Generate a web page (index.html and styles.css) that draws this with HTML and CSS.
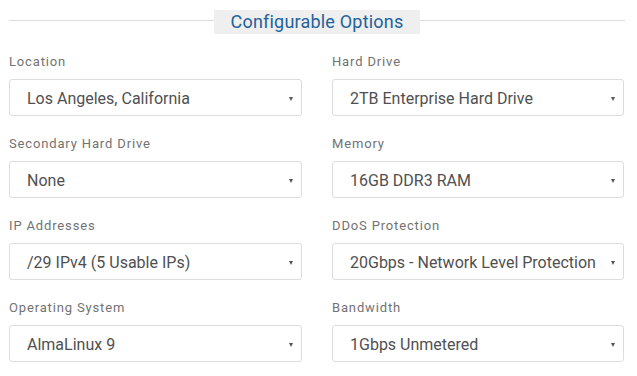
FILE: index.html
```html
<!DOCTYPE html>
<html lang="en">
<head>
  <meta charset="UTF-8" />
  <meta name="viewport" content="width=device-width, initial-scale=1.0" />
  <title>Configurable Options</title>
  <link rel="stylesheet" href="styles.css">
</head>
<body>
  <div class="options">
    <div class="heading">
      <span class="heading-title">Configurable Options</span>
    </div>

    <div class="fields">
      <div class="field">
        <label>Location</label>
        <div class="select"><select><option>Los Angeles, California</option></select></div>
      </div>
      <div class="field">
        <label>Hard Drive</label>
        <div class="select"><select><option>2TB Enterprise Hard Drive</option></select></div>
      </div>
      <div class="field">
        <label>Secondary Hard Drive</label>
        <div class="select"><select><option>None</option></select></div>
      </div>
      <div class="field">
        <label>Memory</label>
        <div class="select"><select><option>16GB DDR3 RAM</option></select></div>
      </div>
      <div class="field">
        <label>IP Addresses</label>
        <div class="select"><select><option>/29 IPv4 (5 Usable IPs)</option></select></div>
      </div>
      <div class="field">
        <label>DDoS Protection</label>
        <div class="select"><select><option>20Gbps - Network Level Protection</option></select></div>
      </div>
      <div class="field">
        <label>Operating System</label>
        <div class="select"><select><option>AlmaLinux 9</option></select></div>
      </div>
      <div class="field">
        <label>Bandwidth</label>
        <div class="select"><select><option>1Gbps Unmetered</option></select></div>
      </div>
    </div>
  </div>
</body>
</html>
```

FILE: styles.css
```css
body {
  margin: 0;
  background: #fff;
  font-family: Roboto, "Liberation Sans", sans-serif;
}
.options {
  width: 616px;
  padding: 10px 0 0 9px;
}
.heading {
  display: flex;
  align-items: center;
  justify-content: center;
  height: 24px;
  margin-bottom: 19px;
  position: relative;
}
.heading::before {
  content: "";
  position: absolute;
  left: 0;
  right: 0;
  top: 10px;
  border-top: 1px solid #dcdcdc;
}
.heading-title {
  position: relative;
  background: #efefef;
  color: #22629a;
  font-size: 18px;
  line-height: 24px;
  letter-spacing: 0.2px;
  padding: 0 17px;
}
.fields {
  display: grid;
  grid-template-columns: 293px 292px;
  column-gap: 30px;
  row-gap: 19px;
}
.field label {
  display: block;
  font-size: 13px;
  line-height: 18px;
  letter-spacing: 0.85px;
  color: #727272;
  margin-bottom: 8px;
}
.select {
  position: relative;
}
.select::after {
  content: "";
  position: absolute;
  right: 9px;
  top: 18px;
  border-left: 2.5px solid transparent;
  border-right: 2.5px solid transparent;
  border-top: 4px solid #555;
}
.select select {
  appearance: none;
  -webkit-appearance: none;
  width: 100%;
  height: 37px;
  padding: 2px 24px 0 17px;
  border: 1px solid #dcdcdc;
  border-radius: 3px;
  background: #fff;
  color: #505050;
  font-family: inherit;
  font-size: 16px;
  outline: none;
}
```
